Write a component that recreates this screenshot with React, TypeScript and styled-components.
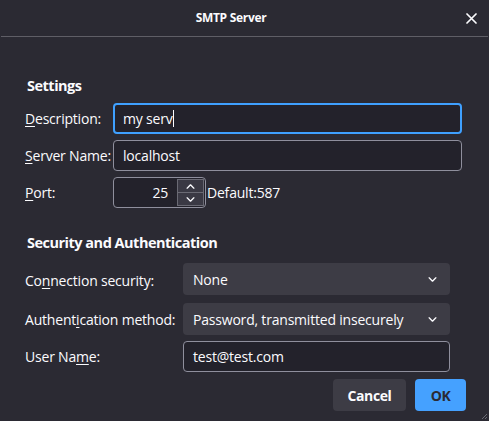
import React from "react";
import styled, { createGlobalStyle } from "styled-components";

const Global = createGlobalStyle`
  html, body {
    margin: 0;
    padding: 0;
    background: #2b2a33;
    color: #fbfbfe;
    font-family: "Open Sans", "Noto Sans", sans-serif;
    font-size: 14px;
    letter-spacing: -0.2px;
    overflow: hidden;
  }
  * { box-sizing: border-box; }
`;

const Window = styled.div`
  position: relative;
  width: 489px;
  height: 421px;
  background: #2b2a33;
  display: flex;
  flex-direction: column;
`;

const Header = styled.div`
  height: 37px;
  display: flex;
  align-items: center;
  border-bottom: 1px solid #5f5e66;
  margin: 0 1px;
`;

const Title = styled.div`
  flex: 1;
  text-align: center;
  font-weight: 700;
  font-size: 12px;
  letter-spacing: -0.3px;
  padding-bottom: 1px;
`;

const Close = styled.div`
  width: 27px;
  display: flex;
  justify-content: flex-end;
  padding-right: 11px;
  color: #fbfbfe;
`;

const Body = styled.div`
  padding: 39px 23px 0 25px;
  display: flex;
  flex-direction: column;
`;

const Heading = styled.div<{ $top?: number }>`
  font-weight: 700;
  font-size: 14.5px;
  letter-spacing: -0.5px;
  margin-left: 2px;
  margin-top: ${(p) => p.$top ?? 0}px;
  line-height: 20px;
`;

const Grid = styled.div<{ $col: number; $right: number; $top: number }>`
  display: grid;
  grid-template-columns: ${(p) => p.$col}px 1fr;
  row-gap: 6px;
  margin-top: ${(p) => p.$top}px;
  margin-right: ${(p) => p.$right}px;
  align-items: center;
`;

const Label = styled.label`
  font-size: 14px;
  white-space: nowrap;
  u {
    text-decoration: underline;
    text-underline-offset: 2px;
  }
`;

const TextBox = styled.div<{ $focus?: boolean }>`
  height: 31px;
  border-radius: 4px;
  background: #23222b;
  border: ${(p) => (p.$focus ? "2px solid #3fa0ff" : "1px solid #8f8f9d")};
  padding-left: ${(p) => (p.$focus ? 8 : 9)}px;
  display: flex;
  align-items: center;
  font-size: 14px;
`;

const Caret = styled.span`
  display: inline-block;
  width: 1px;
  height: 17px;
  background: #fbfbfe;
  margin-left: 1px;
`;

const PortRow = styled.div`
  display: flex;
  align-items: center;
`;

const Spin = styled.div`
  width: 93px;
  height: 31px;
  border: 1px solid #8f8f9d;
  border-radius: 4px;
  background: #23222b;
  display: flex;
  align-items: stretch;
`;

const SpinValue = styled.div`
  flex: 1;
  display: flex;
  align-items: center;
  justify-content: flex-end;
  padding-right: 9px;
`;

const SpinButtons = styled.div`
  width: 27px;
  margin: 1px 1px 1px 0;
  display: flex;
  flex-direction: column;
  border: 1px solid #6a6a74;
`;

const SpinBtn = styled.div<{ $bottom?: boolean }>`
  flex: 1;
  background: #3a3944;
  display: flex;
  align-items: center;
  justify-content: center;
  border-top: ${(p) => (p.$bottom ? "1px solid #6a6a74" : "none")};
`;

const Hint = styled.span`
  margin-left: 1px;
  font-size: 14px;
`;

const Select = styled.div<{ $mb?: number }>`
  height: 32px;
  border-radius: 4px;
  background: #3d3c45;
  display: flex;
  align-items: center;
  justify-content: space-between;
  padding: 0 13px 0 10px;
  font-size: 14px;
  margin-bottom: ${(p) => p.$mb ?? 0}px;
`;

const Footer = styled.div`
  display: flex;
  justify-content: flex-end;
  gap: 9px;
  margin-top: 7px;
`;

const Button = styled.div<{ $primary?: boolean }>`
  height: 32px;
  border-radius: 4px;
  width: ${(p) => (p.$primary ? 51 : 73)}px;
  display: flex;
  align-items: center;
  justify-content: center;
  font-weight: 700;
  font-size: 14px;
  letter-spacing: -0.4px;
  background: ${(p) => (p.$primary ? "#45a1ff" : "#3d3c45")};
  color: ${(p) => (p.$primary ? "#2b2a33" : "#fbfbfe")};
`;

const Grip = styled.svg`
  position: absolute;
  right: 1px;
  bottom: 1px;
`;

const Chevron = ({ up, size = 9 }: { up?: boolean; size?: number }) => (
  <svg width={size} height={Math.round(size * 0.6)} viewBox="0 0 10 6">
    <path
      d={up ? "M1 5 L5 1 L9 5" : "M1 1 L5 5 L9 1"}
      fill="none"
      stroke="#fbfbfe"
      strokeWidth="1.6"
      strokeLinecap="round"
      strokeLinejoin="round"
    />
  </svg>
);

export default function App() {
  return (
    <Window>
      <Global />
      <Header>
        <Title>SMTP Server</Title>
        <Close>
          <svg width="11" height="11" viewBox="0 0 11 11">
            <path d="M1 1 L10 10 M10 1 L1 10" stroke="#fbfbfe" strokeWidth="1.7" strokeLinecap="round" />
          </svg>
        </Close>
      </Header>
      <Body>
        <Heading>Settings</Heading>
        <Grid $col={88} $right={4} $top={7}>
          <Label>
            <u>D</u>escription:
          </Label>
          <TextBox $focus>
            my serv<Caret />
          </TextBox>
          <Label>
            <u>S</u>erver Name:
          </Label>
          <TextBox>localhost</TextBox>
          <Label>
            <u>P</u>ort:
          </Label>
          <PortRow>
            <Spin>
              <SpinValue>25</SpinValue>
              <SpinButtons>
                <SpinBtn>
                  <Chevron up size={9} />
                </SpinBtn>
                <SpinBtn $bottom>
                  <Chevron size={9} />
                </SpinBtn>
              </SpinButtons>
            </Spin>
            <Hint>Default:587</Hint>
          </PortRow>
        </Grid>
        <Heading $top={25}>Security and Authentication</Heading>
        <Grid $col={158} $right={16} $top={10}>
          <Label>
            Co<u>n</u>nection security:
          </Label>
          <Select $mb={2}>
            None
            <Chevron />
          </Select>
          <Label>
            Authent<u>i</u>cation method:
          </Label>
          <Select>
            Password, transmitted insecurely
            <Chevron />
          </Select>
          <Label>
            User Na<u>m</u>e:
          </Label>
          <TextBox>test@test.com</TextBox>
        </Grid>
        <Footer>
          <Button>Cancel</Button>
          <Button $primary>OK</Button>
        </Footer>
      </Body>
      <Grip width="8" height="8" viewBox="0 0 8 8">
        <path d="M7 2 L2 7 M7 5 L5 7" stroke="#6a6a74" strokeWidth="1" />
      </Grip>
    </Window>
  );
}
